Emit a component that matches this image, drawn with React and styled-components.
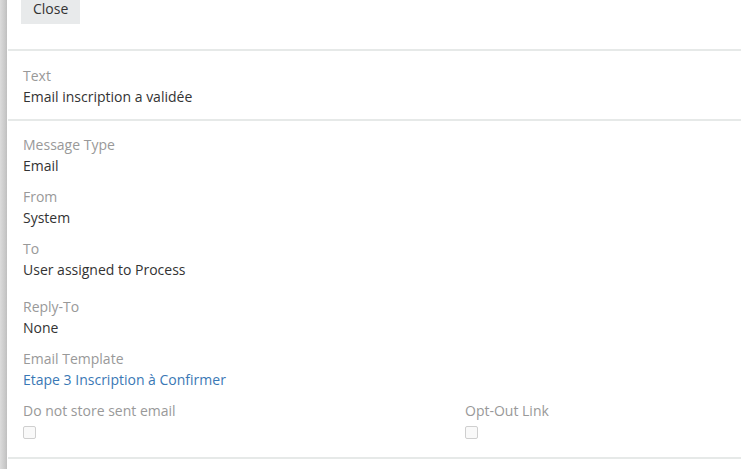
import React from "react";
import styled, { createGlobalStyle } from "styled-components";

const Global = createGlobalStyle`
  html, body { margin: 0; padding: 0; background: #fff; }
  body {
    font-family: "Open Sans", "Liberation Sans", sans-serif;
    font-size: 14px;
    color: #333;
    overflow: hidden;
  }
`;

const Page = styled.div`
  display: flex;
  width: 741px;
  height: 469px;
  overflow: hidden;
`;

const Shade = styled.div`
  width: 7px;
  flex: none;
  background: linear-gradient(to right, #dcdcdc, #c9c9c9 70%, #bfbfbf);
`;

const Panel = styled.div`
  flex: 1;
  margin-left: 1px;
  display: flex;
  flex-direction: column;
`;

const Header = styled.div`
  height: 51px;
  padding-left: 13px;
  border-bottom: 2px solid #e6e9e8;
  box-sizing: border-box;
`;

const Button = styled.button`
  display: block;
  margin-top: -7px;
  height: 31px;
  padding: 0 12px;
  border: none;
  background: #e8eaeb;
  color: #333;
  font-family: inherit;
  font-size: 14px;
  line-height: 31px;
  border-radius: 0;
`;

const Section = styled.div`
  padding: ${(p) => p.$top ?? 14}px 15px ${(p) => p.$bottom ?? 3}px;
  border-bottom: 2px solid #e6e9e8;
`;

const Grid = styled.div`
  display: grid;
  grid-template-columns: 442px 1fr;
`;

const Field = styled.div`
  margin-bottom: ${(p) => p.$mb ?? 10}px;
`;

const Label = styled.div`
  color: #999;
  line-height: 21px;
`;

const Value = styled.div`
  color: #333;
  line-height: 21px;
`;

const Link = styled.a`
  color: #3a78b5;
  text-decoration: none;
  line-height: 21px;
  display: block;
`;

const Check = styled.span`
  display: block;
  width: 11px;
  height: 11px;
  margin-top: 5px;
  border: 1px solid #cfcfcf;
  border-radius: 2px;
  background: #f9f9f9;
`;

export default function App() {
  return (
    <Page>
      <Global />
      <Shade />
      <Panel>
        <Header>
          <Button>Close</Button>
        </Header>
        <Section $top={14} $bottom={2}>
          <Field>
            <Label>Text</Label>
            <Value>Email inscription a validée</Value>
          </Field>
        </Section>
        <Section $top={13} $bottom={0}>
          <Field>
            <Label>Message Type</Label>
            <Value>Email</Value>
          </Field>
          <Field>
            <Label>From</Label>
            <Value>System</Value>
          </Field>
          <Field $mb={16}>
            <Label>To</Label>
            <Value>User assigned to Process</Value>
          </Field>
          <Field>
            <Label>Reply-To</Label>
            <Value>None</Value>
          </Field>
          <Field>
            <Label>Email Template</Label>
            <Link href="#">Etape 3 Inscription à Confirmer</Link>
          </Field>
          <Grid>
            <Field $mb={18}>
              <Label>Do not store sent email</Label>
              <Check />
            </Field>
            <Field $mb={18}>
              <Label>Opt-Out Link</Label>
              <Check />
            </Field>
          </Grid>
        </Section>
      </Panel>
    </Page>
  );
}
